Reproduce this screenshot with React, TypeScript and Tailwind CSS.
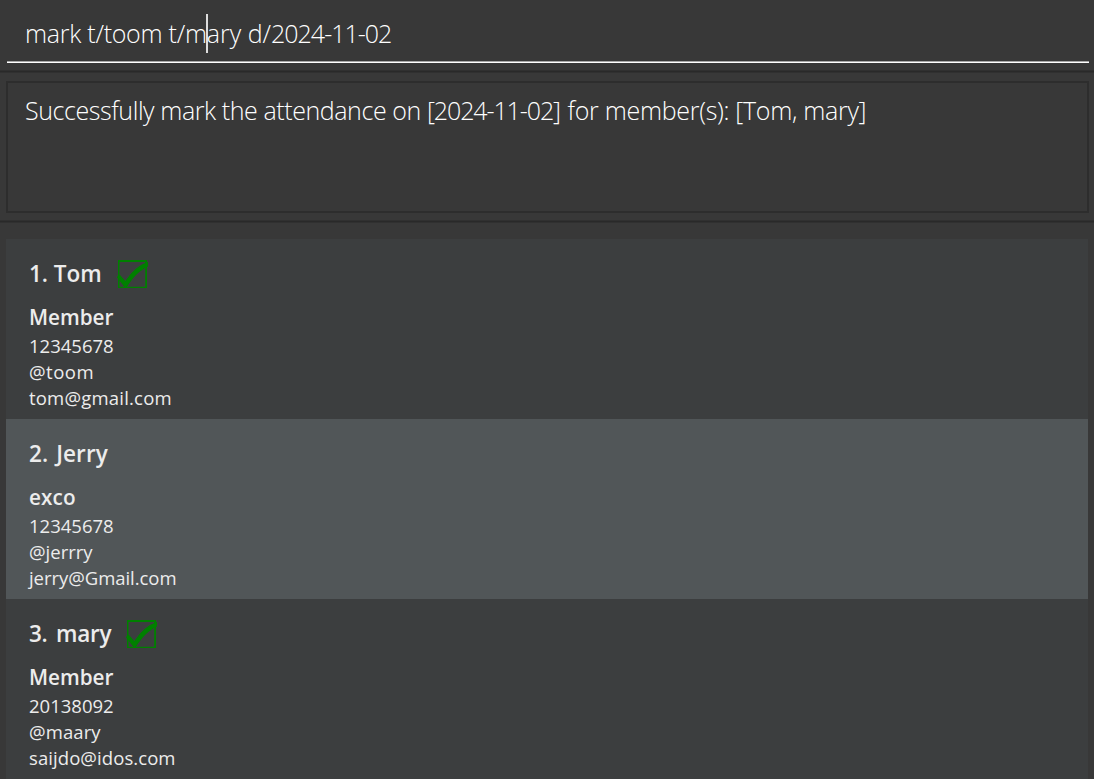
type Person = {
  title: string;
  role: string;
  phone: string;
  handle: string;
  email: string;
  present: boolean;
  tracking: [string, string, string, string];
};

const people: Person[] = [
  {
    title: "1. Tom",
    role: "Member",
    phone: "12345678",
    handle: "@toom",
    email: "tom@gmail.com",
    present: true,
    tracking: ["w-[73px]", "", "tracking-[0.5px]", "tracking-[0.2px]"],
  },
  {
    title: "2. Jerry",
    role: "exco",
    phone: "12345678",
    handle: "@jerrry",
    email: "jerry@Gmail.com",
    present: false,
    tracking: ["tracking-[0.1px] [word-spacing:2px]", "tracking-[0.1px]", "", "tracking-[-0.05px]"],
  },
  {
    title: "3. mary",
    role: "Member",
    phone: "20138092",
    handle: "@maary",
    email: "saijdo@idos.com",
    present: true,
    tracking: ["w-[82px] tracking-[-0.25px] [word-spacing:2.8px]", "", "tracking-[0.1px]", "tracking-[0.08px]"],
  },
];

function CheckedBox() {
  return (
    <svg className="ml-[15px] h-[30px] w-8 shrink-0" viewBox="0 0 32 30" fill="none">
      <path d="M1 1h29v28H1zM2.5 3v24.7h25.7V3z" fill="#008000" fillRule="evenodd" />
      <path
        d="M-.3 18 2.6 15.4 8.3 22Q17.5 7.5 31 2.7V7.4C23 11 15.8 18.3 9.6 28.4H7.8Z"
        fill="#008000"
      />
    </svg>
  );
}

function PersonCard({ person, selected }: { person: Person; selected: boolean }) {
  const [title, role, handle, email] = person.tracking;
  return (
    <li
      className={`flex h-[180px] shrink-0 flex-col whitespace-pre pl-[23px] pt-5 text-[#ececec] ${
        selected ? "bg-[#515658]" : "bg-[#3c3e3f]"
      }`}
    >
      <div className="flex h-[30px] items-center">
        <span className={`text-[22.5px] font-semibold leading-[30px] ${title}`}>{person.title}</span>
        {person.present && <CheckedBox />}
      </div>
      <div className={`mt-[14px] text-[20.7px] font-semibold leading-[28px] ${role}`}>{person.role}</div>
      <div className="mt-[2px] text-[18.5px] leading-[26px]">{person.phone}</div>
      <div className={`text-[18.5px] leading-[26px] ${handle}`}>{person.handle}</div>
      <div className={`text-[18.5px] leading-[26px] ${email}`}>{person.email}</div>
    </li>
  );
}

export default function App() {
  return (
    <div className="flex h-[779px] w-[1094px] flex-col overflow-hidden bg-[#383838] font-['Open_Sans','Noto_Sans',sans-serif]">
      <div className="h-[70px] pl-[7px] pr-[5px]">
        <div className="flex h-[62px] items-center whitespace-pre border-b border-b-[#a9a9a9] pl-[18px] pt-[7px] text-[25px] font-light text-white">
          <span className="tracking-[-0.27px]">mark t/toom t/m</span>
          <span className="-mx-px mb-px h-[39px] w-0.5 bg-[#dddddd]" />
          <span>ary d/</span>
          <span className="tracking-[-1px]">2024-11-02</span>
        </div>
        <div className="h-px bg-white" />
      </div>
      <div className="h-[3px] shrink-0 border-y border-[#303030] bg-[#292929]" />
      <div className="h-[147px] pb-[7px] pl-[6px] pr-[5px] pt-2">
        <div className="h-[132px] whitespace-pre border-2 border-[#2d2d2d] pl-[17px] pt-[9px] text-[25px] font-light leading-[36px] text-white">
          <span className="tracking-[-0.42px]">Successfully mark the attendance on </span>
          <span className="tracking-[-1.1px] [word-spacing:2.2px]">[2024-11-02] </span>
          <span className="tracking-[-0.3px]">for member(s): [Tom, mary]</span>
        </div>
      </div>
      <div className="h-[3px] shrink-0 border-y border-[#303030] bg-[#292929]" />
      <ul className="mt-4 flex flex-col pl-[6px] pr-[6px]">
        {people.map((person, i) => (
          <PersonCard key={person.title} person={person} selected={i === 1} />
        ))}
      </ul>
    </div>
  );
}
